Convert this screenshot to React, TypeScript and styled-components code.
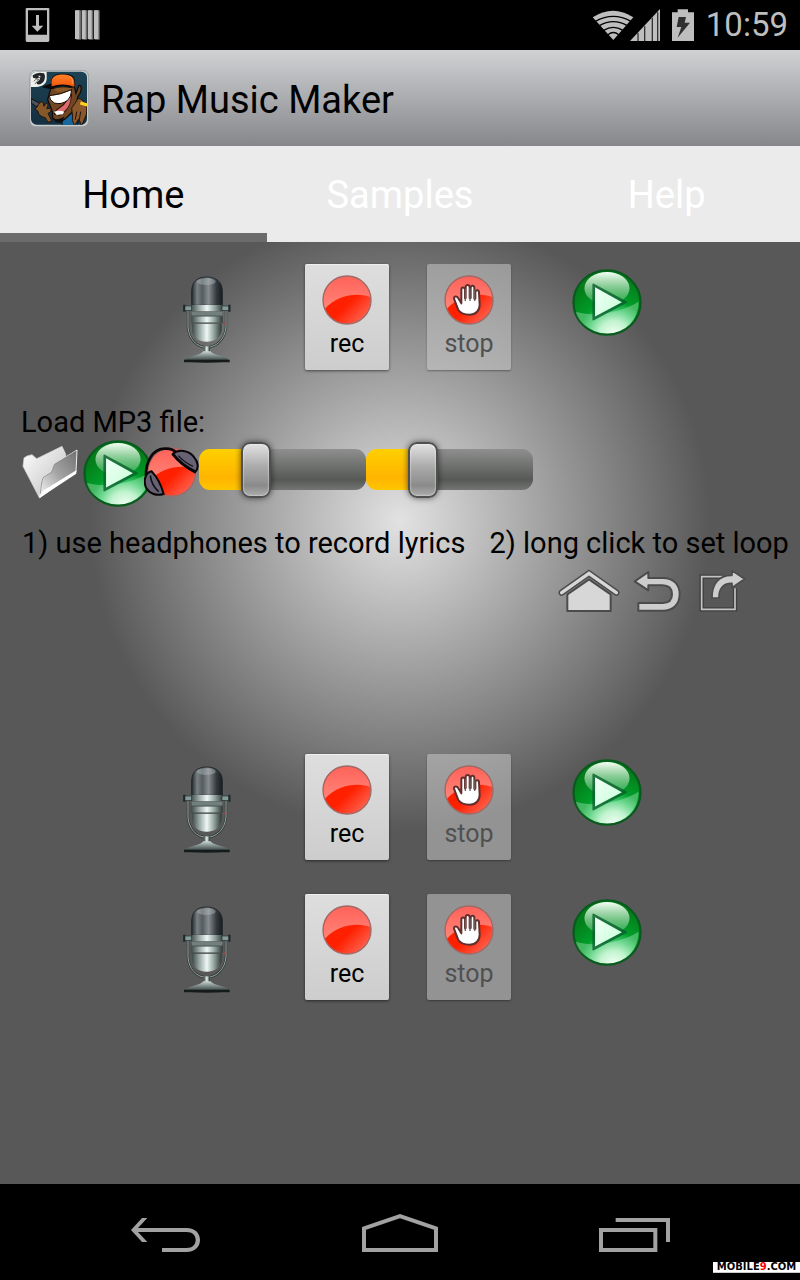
import React, { useState } from "react";
import styled, { createGlobalStyle } from "styled-components";

const GlobalStyle = createGlobalStyle`
  *, *::before, *::after { box-sizing: border-box; }
  body { margin: 0; background: #000; font-family: Roboto, "Noto Sans", sans-serif; color: #000; }
  button { font: inherit; color: inherit; margin: 0; padding: 0; border: 0; background: none; cursor: pointer; }
  svg { display: block; }
`;

const Screen = styled.div`
  position: relative;
  display: flex;
  flex-direction: column;
  min-height: 100vh;
  overflow-x: hidden;
`;

const StatusBar = styled.div`
  display: flex;
  justify-content: space-between;
  align-items: center;
  height: 50px;
  padding: 0 12px 0 25px;
  background: #000;
  color: #bebebe;
`;

const StatusGroup = styled.div<{ $gap: number }>`
  display: flex;
  align-items: center;
  gap: ${(p) => p.$gap}px;
`;

const Clock = styled.time`
  font-size: 33px;
  line-height: 50px;
`;

const ActionBar = styled.header`
  display: flex;
  align-items: center;
  gap: 12px;
  height: 96px;
  padding: 0 29px;
  background: linear-gradient(#d0d1d3, #86878b);
`;

const Title = styled.h1`
  margin: 0;
  padding-top: 4px;
  font-size: 38px;
  font-weight: 400;
  line-height: 48px;
`;

const Tabs = styled.nav`
  display: grid;
  grid-template-columns: repeat(3, 1fr);
  height: 96px;
  background: #ebebeb;
`;

const Tab = styled.button<{ $active: boolean }>`
  padding-top: 11px;
  border-bottom: 9px solid ${(p) => (p.$active ? "#6b6b6b" : "transparent")};
  color: ${(p) => (p.$active ? "#000" : "#fff")};
  font-size: 38px;
  line-height: 48px;
`;

const Content = styled.main`
  flex: 1;
  padding: 22px 0 60px;
  background: radial-gradient(circle 310px at 50% 279px, #e2e2e2, #585858) #585858;
`;

const TrackRow = styled.section`
  display: flex;
  justify-content: center;
  align-items: flex-start;
  gap: 61px;
  padding-left: 12px;
  margin-bottom: 34px;
`;

const ButtonPair = styled.div`
  display: flex;
  gap: 38px;
`;

const MicButton = styled.button`
  display: flex;
  justify-content: center;
  width: 74px;
  padding-top: 11px;
`;

const PlayButton = styled.button`
  padding-top: 5px;
`;

const PadButton = styled.button`
  display: flex;
  flex-direction: column;
  align-items: center;
  gap: 4px;
  width: 84px;
  height: 106px;
  padding-top: 11px;
  border-radius: 2px;
  background: linear-gradient(#dedede, #cdcdcd);
  box-shadow: 0 1px 3px rgba(0, 0, 0, 0.55), inset 0 1px 0 rgba(255, 255, 255, 0.5);
  font-size: 25px;
  line-height: 30px;

  &:disabled {
    background: rgba(205, 205, 205, 0.5);
    box-shadow: 0 1px 2px rgba(0, 0, 0, 0.35);
    color: #505050;
  }
`;

const Loader = styled.section`
  margin-bottom: 141px;
`;

const Caption = styled.p`
  margin: 0;
  padding-left: 21px;
  font-size: 29px;
  line-height: 36px;
`;

const LoaderRow = styled.div`
  display: flex;
  align-items: center;
  height: 67px;
  padding-left: 22px;
  margin-bottom: 18px;
`;

const FolderButton = styled.button`
  padding-bottom: 4px;
  margin-right: 5px;
`;

const HeadphoneButton = styled.button`
  position: relative;
  padding-bottom: 4px;
  margin-left: -9px;
`;

const Slider = styled.input`
  appearance: none;
  flex: 0 1 167px;
  min-width: 0;
  height: 41px;
  margin: 0 0 8px;
  border-radius: 11px;
  background:
    linear-gradient(#ffd000, #ffb400 70%, #ffc600) no-repeat 0 0 / calc(15px + (100% - 30px) * var(--level)) 100%,
    linear-gradient(#8e8f8e, #565956 75%, #737573);

  &::-webkit-slider-thumb {
    appearance: none;
    width: 30px;
    height: 56px;
    border: 2px solid #505050;
    border-radius: 9px;
    background: linear-gradient(#e2e2e2, #a9a9a9 45%, #8b8b8b 80%, #adadad);
    box-shadow: inset 0 0 2px #fff, 0 0 6px rgba(0, 0, 0, 0.6);
  }
`;

const Hints = styled.div`
  display: flex;
  gap: 24px;
  padding-left: 1px;
  white-space: nowrap;
  margin-bottom: 8px;

  ${Caption} + ${Caption} { padding-left: 0; }
`;

const Shortcuts = styled.div`
  display: flex;
  justify-content: flex-end;
  gap: 13px;
  padding-right: 54px;
  height: 44px;

  & > :last-child { margin-left: 5px; }
`;

const NavBar = styled.nav`
  display: grid;
  grid-template-columns: repeat(3, 1fr);
  height: 96px;
  padding: 0 49px 27px;
  background: #000;
`;

const NavButton = styled.button`
  display: flex;
  justify-content: center;
  align-items: flex-end;
`;

const Watermark = styled.div`
  position: absolute;
  right: 0;
  bottom: 7px;
  width: 87px;
  height: 11px;
  background: #fff;
  border-bottom: 1px solid #ccc;
  text-align: center;
  text-transform: uppercase;
  font: 700 10px/10px "DejaVu Sans", sans-serif;
  color: #000;
  white-space: nowrap;

  & b { color: #f00; }
`;

const MicIcon = () => (
  <svg width="50" height="89" viewBox="36 60 150 267" aria-hidden="true">
    <defs>
      <linearGradient id="micHead" x1="0" x2="1">
        <stop offset="0" stopColor="#20282b" /><stop offset=".18" stopColor="#8d9699" /><stop offset=".35" stopColor="#62696d" />
        <stop offset=".55" stopColor="#a0a6a8" /><stop offset=".8" stopColor="#394044" /><stop offset="1" stopColor="#14191b" />
      </linearGradient>
      <linearGradient id="micBody" x1="0" x2="1">
        <stop offset="0" stopColor="#3e4a48" /><stop offset=".25" stopColor="#99a8a5" /><stop offset=".5" stopColor="#eef7f4" />
        <stop offset=".72" stopColor="#9aaba6" /><stop offset="1" stopColor="#2d3836" />
      </linearGradient>
      <linearGradient id="micBase" x1="0" y1="0" x2="0" y2="1">
        <stop offset="0" stopColor="#c9d5d2" /><stop offset=".5" stopColor="#6d7a78" /><stop offset="1" stopColor="#1b2322" />
      </linearGradient>
      <pattern id="micMesh" width="6" height="6" patternUnits="userSpaceOnUse">
        <path d="M0 0L6 6M6 0L0 6" stroke="#20282b" strokeWidth="1" opacity=".6" />
      </pattern>
    </defs>
    <path d="M54 165V216C56 252 80 277 110 277S165 252 168 216V165" fill="none" stroke="#2e3837" strokeWidth="7" />
    <path d="M54 165V216C56 252 80 277 110 277S165 252 168 216V165" fill="none" stroke="#98a7a3" strokeWidth="3" />
    <rect x="102" y="274" width="17" height="24" fill="url(#micBody)" />
    <path d="M42 318Q44 309 72 302Q94 297 100 289H121Q128 297 150 302Q177 309 179 318Q150 323 110 323T42 318Z" fill="url(#micBase)" />
    <path d="M42 318H179" stroke="#141b1a" strokeWidth="7" fill="none" />
    <path d="M66 206H155V222C155 245 137 260 110 260S66 245 66 222Z" fill="url(#micBody)" />
    <path d="M65 151V109C65 79 84 66 110 66S157 79 157 109V151Z" fill="url(#micHead)" />
    <path d="M65 151V109C65 79 84 66 110 66S157 79 157 109V151Z" fill="url(#micMesh)" stroke="#23292b" strokeWidth="3" />
    <ellipse cx="109" cy="80" rx="28" ry="10" fill="#b9c1c2" opacity=".4" />
    <rect x="62" y="150" width="98" height="19" rx="3" fill="url(#micBody)" />
    <path d="M65 170H158L155 185H67Z" fill="#71807c" />
    <rect x="64" y="184" width="94" height="19" fill="url(#micBody)" />
    <path d="M64 183H158M64 204H158" stroke="#34413e" strokeWidth="2" />
    <path d="M43 149V170M178 149V170" stroke="#1b2827" strokeWidth="7" />
    <rect x="45" y="153" width="20" height="13" fill="#839a99" stroke="#26332f" strokeWidth="2" />
    <rect x="156" y="153" width="20" height="13" fill="#839a99" stroke="#26332f" strokeWidth="2" />
    <rect x="159" y="202" width="5" height="6" fill="#c43838" />
  </svg>
);

const RedDisc = () => (
  <>
    <defs>
      <linearGradient id="disc" x1="0" y1="0" x2="1" y2="1">
        <stop offset=".55" stopColor="#ff2000" /><stop offset="1" stopColor="#ff7a6c" />
      </linearGradient>
      <linearGradient id="discGloss" x1="0" y1="0" x2="0" y2="1">
        <stop offset="0" stopColor="#ff6259" /><stop offset="1" stopColor="#ff8578" />
      </linearGradient>
    </defs>
    <circle cx="75" cy="75" r="72" fill="url(#disc)" />
    <path d="M8 102C2 86 2 64 12 44C24 19 48 3 75 3S126 18 138 42C143 51 146 60 147 67C112 51 48 57 8 102Z" fill="url(#discGloss)" />
    <circle cx="75" cy="75" r="72" fill="none" stroke="#9f6a68" strokeWidth="4" />
  </>
);

const RecIcon = () => (
  <svg width="50" height="50" viewBox="0 0 150 150" aria-hidden="true"><RedDisc /></svg>
);

const StopIcon = () => (
  <svg width="50" height="50" viewBox="0 0 150 150" aria-hidden="true">
    <RedDisc />
    <path d="M43 105C39 94 34 82 30 71C29 63 39 62 43 70L52 85V44C52 35 62 35 63 44V70L65 69V36C66 28 76 28 77 36V69H80V38C81 30 91 31 91 39V71H94V51C95 43 105 44 105 52L107 89C107 106 96 119 77 119C60 119 49 114 43 105Z" fill="#fff" stroke="#5f302e" strokeWidth="6" strokeLinejoin="round" />
    <path d="M64 42V78M78 40V78M92 44V78" stroke="#6d5b5a" strokeWidth="4" />
  </svg>
);

const PlayIcon = () => (
  <svg width="70" height="67" viewBox="471 41 210 202" aria-hidden="true">
    <defs>
      <radialGradient id="orb" cx=".6" cy="1" r=".85">
        <stop offset="0" stopColor="#fafffb" /><stop offset=".25" stopColor="#b4efc4" /><stop offset=".45" stopColor="#35c463" />
        <stop offset=".6" stopColor="#009d2a" /><stop offset="1" stopColor="#047d1a" />
      </radialGradient>
      <linearGradient id="orbGloss" x1="0" y1="0" x2="0" y2="1">
        <stop offset="0" stopColor="#f4fff4" /><stop offset="1" stopColor="#8bd69b" stopOpacity=".3" />
      </linearGradient>
      <linearGradient id="orbArrow" x1="0" y1="0" x2="1" y2="1">
        <stop offset="0" stopColor="#f4fff8" /><stop offset="1" stopColor="#c3ffd6" />
      </linearGradient>
    </defs>
    <ellipse cx="576" cy="142" rx="101" ry="97" fill="url(#orb)" stroke="#075b1c" strokeWidth="7" />
    <path d="M482 170C535 187 620 172 671 140C672 188 636 232 577 234C528 233 490 205 482 170Z" fill="#e4ffec" opacity=".3" />
    <ellipse cx="576" cy="99" rx="68" ry="49" fill="url(#orbGloss)" />
    <path d="M535 88L633 141L535 193Z" fill="#09602d" opacity=".8" stroke="#09602d" strokeWidth="6" strokeLinejoin="round" />
    <path d="M540 96L621 141L540 184Z" fill="url(#orbArrow)" />
  </svg>
);

const FolderIcon = () => (
  <svg width="56" height="54" viewBox="39 131 168 162" aria-hidden="true">
    <defs>
      <linearGradient id="folderBack" x1="0" y1="0" x2="1" y2="1">
        <stop offset="0" stopColor="#fff" /><stop offset="1" stopColor="#bcbcbc" />
      </linearGradient>
      <linearGradient id="folderFront" x1="0" y1="1" x2="1" y2="0">
        <stop offset="0" stopColor="#f8f8f8" /><stop offset=".5" stopColor="#a3a3a3" /><stop offset="1" stopColor="#707070" />
      </linearGradient>
    </defs>
    <path d="M42 195L45 170L54 164L69 160L83 172L159 135L170 158L173 230L91 289Z" fill="url(#folderBack)" stroke="#d8d8d8" strokeWidth="2" />
    <path d="M92 289C95 261 97 237 103 227L127 211L135 188L204 146L201 212Z" fill="url(#folderFront)" stroke="#eee" strokeWidth="3" />
    <path d="M92 289L102 268L202 207V217Z" fill="#fff" />
    <path d="M94 277C96 256 98 238 103 228L128 212L136 189L201 149" fill="none" stroke="#747474" strokeWidth="2" />
  </svg>
);

const HeadphoneIcon = () => (
  <svg width="55" height="50" viewBox="402 142 165 150" aria-hidden="true">
    <g transform="translate(410 142)"><RedDisc /></g>
    <path d="M408 228C407 186 428 149 462 147C482 145 491 151 502 161" fill="none" stroke="#0b0708" strokeWidth="8" />
    <path d="M489 162C503 149 536 150 551 171C566 188 567 207 555 218C531 205 502 185 489 162Z" fill="#666173" stroke="#080506" strokeWidth="6" />
    <path d="M487 162Q513 195 557 217" fill="none" stroke="#080506" strokeWidth="8" />
    <path d="M505 168Q522 188 549 200" fill="none" stroke="#151116" strokeWidth="4" />
    <path d="M425 215C405 219 399 245 409 266C419 282 439 290 461 283C453 253 440 231 425 215Z" fill="#666173" stroke="#080506" strokeWidth="6" />
    <path d="M421 228Q424 256 446 276" fill="none" stroke="#151116" strokeWidth="5" />
  </svg>
);

const outline = { stroke: "#4b4b4b", strokeWidth: 6, strokeLinejoin: "round" as const };

const HomeIcon = () => (
  <svg width="62" height="44" viewBox="56 147 186 132" aria-hidden="true">
    <path d="M84 273V223L149 178L214 223V273Z" fill="#d7d7d7" {...outline} />
    <path d="M67 218L149 160L231 218" fill="none" stroke="#4b4b4b" strokeWidth="19" strokeLinecap="round" />
    <path d="M67 218L149 160L231 218" fill="none" stroke="#d7d7d7" strokeWidth="10" strokeLinecap="round" />
  </svg>
);

const ReturnIcon = () => (
  <svg width="48" height="43" viewBox="279 150 144 129" aria-hidden="true">
    <path d="M284 184L325 156V174H368C402 174 419 195 419 222C419 253 400 272 369 272H295V249H368C387 249 396 239 396 223C396 206 386 196 367 196H325V211Z" fill="#cdcdcd" {...outline} />
  </svg>
);

const ShareIcon = () => (
  <svg width="47" height="44" viewBox="480 144 141 132" aria-hidden="true">
    <path d="M551 167H488V265H588V202" fill="none" stroke="#3f3f3f" strokeWidth="13" />
    <path d="M551 167H488V265H588V202" fill="none" stroke="#c4c4c4" strokeWidth="5" />
    <path d="M519 231C518 190 539 162 579 163V149L617 174L579 200V187C552 186 539 204 540 231Z" fill="#cdcdcd" {...outline} strokeWidth={5} />
  </svg>
);

const AppIcon = () => (
  <svg width="60" height="57" viewBox="27 27 180 171" aria-hidden="true">
    <defs>
      <linearGradient id="appBg" x1="0" y1="0" x2="0" y2="1">
        <stop offset="0" stopColor="#1c4354" /><stop offset="1" stopColor="#142f40" />
      </linearGradient>
      <linearGradient id="cap" x1="0" y1="0" x2="0" y2="1">
        <stop offset="0" stopColor="#ff8128" /><stop offset="1" stopColor="#f2560d" />
      </linearGradient>
      <clipPath id="appClip"><rect x="33" y="32" width="168" height="159" rx="17" /></clipPath>
    </defs>
    <rect x="29" y="28" width="177" height="169" rx="18" fill="#c9cccd" stroke="#8e9193" strokeWidth="2" />
    <g clipPath="url(#appClip)">
      <rect x="31" y="30" width="172" height="164" fill="url(#appBg)" />
      <path d="M128 169L153 150L175 165L171 194H126Z" fill="#1768a1" stroke="#08141b" strokeWidth="3" />
      <path d="M92 83L163 77L168 97L177 73C188 72 185 94 173 108L169 131L157 153L136 173L120 184L98 172L97 151L83 116Z" fill="#704623" stroke="#130c09" strokeWidth="4" />
      <path d="M99 84Q123 74 157 82L145 90L113 93Z" fill="#8e5928" />
      <path d="M156 92C156 126 144 152 119 164L100 160L108 146L130 130Z" fill="#2a0b0a" />
      <path d="M152 104C153 127 142 148 124 156L108 150L132 132Z" fill="#dd6a6c" />
      <path d="M88 104Q120 102 155 86Q154 108 143 118Q124 132 103 126Q88 118 88 104Z" fill="#fff" stroke="#160c08" strokeWidth="3" />
      <path d="M102 152Q119 146 133 152L128 160L110 162Z" fill="#fff" />
      <path d="M66 79C76 71 88 71 95 67C91 41 110 37 140 39C160 41 168 52 165 75L152 80Q119 71 91 84Q77 83 66 79Z" fill="#0c0a0c" />
      <path d="M95 70C92 44 112 39 138 41C160 43 165 55 163 77Q128 65 95 76Z" fill="url(#cap)" />
      <path d="M150 45Q160 54 157 69" stroke="#ffb06b" strokeWidth="2" fill="none" />
      <path d="M34 113L81 139Q91 146 84 151L68 149L33 126Z" fill="#4a525a" stroke="#121519" strokeWidth="3" />
      <path d="M51 139C57 124 66 119 70 126L72 136L77 128Q84 124 84 133L80 143L91 142Q98 151 84 157L95 180L84 184L76 170Q55 166 54 151L44 143Z" fill="#875829" stroke="#25160c" strokeWidth="3" />
      <path d="M157 178C160 154 151 144 158 136C170 124 170 110 181 113C194 122 204 132 199 161L185 194L176 174L164 194Z" fill="#8a582c" stroke="#20140c" strokeWidth="3" />
      <path d="M170 152L166 176M182 152L178 176" stroke="#20140c" strokeWidth="3" />
      <path d="M181 126L202 132" stroke="#ffd21d" strokeWidth="9" />
      <path d="M98 170Q116 181 134 166L125 184H107Z" fill="#100e10" />
      <path d="M28 27H80V54C79 73 60 80 28 78Z" fill="#f1f1ec" />
      <path d="M38 43Q52 31 72 37Q79 48 70 63Q55 77 49 65Q62 57 60 48L50 53L39 50Z" fill="#22272a" />
      <path d="M56 41L65 49L54 50ZM41 61Q49 51 56 55L45 69" fill="#f6f6f0" stroke="#222" strokeWidth="2" />
    </g>
  </svg>
);

const DownloadIcon = () => (
  <svg width="25" height="36" viewBox="75 21 75 108" aria-hidden="true">
    <path fillRule="evenodd" fill="#bebebe" d="M80 24H145Q148 24 148 28V121Q148 126 144 126H81Q77 126 77 121V28Q77 24 80 24ZM84 31V104H141V31Z" />
    <path d="M108 45H117V77H130L112 95L95 77H108Z" fill="#bebebe" />
  </svg>
);

const BarsIcon = () => (
  <svg width="25" height="32" viewBox="225 27 75 96" aria-hidden="true">
    <path d="M229 31H243V119H229ZM247 31H261V119H247ZM266 31H280V119H266ZM284 31H299V119H284Z" fill="#6b6b6b" />
    <path d="M225 31H238V117H225ZM245 31H257V117H245ZM263 31H275V117H263ZM282 31H295V117H282Z" fill="#bebebe" />
  </svg>
);

const SignalIcons = () => (
  <svg width="68" height="32" viewBox="93 24 204 96" aria-hidden="true">
    <path d="M95 49Q156 10 217 49L157 117Z" fill="#bebebe" />
    <path d="M103 61Q157 31 210 61M115 74Q157 50 199 74M128 88Q157 70 186 88M141 101Q157 88 173 101" fill="none" stroke="#000" strokeWidth="4" />
    <path d="M207 120L297 24V120Z" fill="#bebebe" />
    <path d="M231 96V120M251 76V120M274 50V120M290 34V120" stroke="#333" strokeWidth="4" />
  </svg>
);

const BatteryIcon = () => (
  <svg width="22" height="32" viewBox="330 24 66 96" aria-hidden="true">
    <path d="M330 34H347V25H378V34H396V120H330Z" fill="#bebebe" />
    <path d="M350 48H372L368 65H384L347 110L358 78H344Z" fill="#303030" />
  </svg>
);

const NavBack = () => (
  <svg width="70" height="36" viewBox="36 111 210 108" aria-hidden="true">
    <path d="M36 150L69 114H85L57 144H202C230 144 243 161 243 180S230 216 202 216H129V204H202C221 204 230 194 230 180S221 156 202 156H57L85 186H69Z" fill="#a2a2a2" />
  </svg>
);

const NavHome = () => (
  <svg width="76" height="40" viewBox="726 99 228 120" aria-hidden="true">
    <path d="M732 210V145L840 108L948 145V210Z" fill="none" stroke="#a2a2a2" strokeWidth="12" />
  </svg>
);

const NavRecents = () => (
  <svg width="71" height="36" viewBox="30 51 213 108" aria-hidden="true">
    <path d="M36 90H199V150H36ZM80 60H237V126" fill="none" stroke="#a2a2a2" strokeWidth="12" />
  </svg>
);

const TrackControls = ({ track }: { track: number }) => (
  <TrackRow aria-label={`Track ${track}`}>
    <MicButton aria-label="Microphone"><MicIcon /></MicButton>
    <ButtonPair>
      <PadButton><RecIcon />rec</PadButton>
      <PadButton disabled><StopIcon />stop</PadButton>
    </ButtonPair>
    <PlayButton aria-label="Play"><PlayIcon /></PlayButton>
  </TrackRow>
);

const LevelSlider = ({ label }: { label: string }) => {
  const [level, setLevel] = useState(31);
  return (
    <Slider
      type="range"
      min={0}
      max={100}
      value={level}
      aria-label={label}
      onChange={(e) => setLevel(Number(e.target.value))}
      style={{ "--level": level / 100 } as React.CSSProperties}
    />
  );
};

const tabs = ["Home", "Samples", "Help"];

export default function App() {
  const [active, setActive] = useState("Home");
  return (
    <>
      <GlobalStyle />
      <Screen>
        <StatusBar>
          <StatusGroup $gap={25}><DownloadIcon /><BarsIcon /></StatusGroup>
          <StatusGroup $gap={12}><SignalIcons /><BatteryIcon /><Clock>10:59</Clock></StatusGroup>
        </StatusBar>
        <ActionBar><AppIcon /><Title>Rap Music Maker</Title></ActionBar>
        <Tabs>
          {tabs.map((name) => (
            <Tab key={name} $active={name === active} onClick={() => setActive(name)}>{name}</Tab>
          ))}
        </Tabs>
        <Content>
          <TrackControls track={1} />
          <Loader>
            <Caption>Load MP3 file:</Caption>
            <LoaderRow>
              <FolderButton aria-label="Open folder"><FolderIcon /></FolderButton>
              <button aria-label="Play file"><PlayIcon /></button>
              <HeadphoneButton aria-label="Record with headphones"><HeadphoneIcon /></HeadphoneButton>
              <LevelSlider label="Music volume" />
              <LevelSlider label="Voice volume" />
            </LoaderRow>
            <Hints>
              <Caption>1) use headphones to record lyrics</Caption>
              <Caption>2) long click to set loop</Caption>
            </Hints>
            <Shortcuts>
              <button aria-label="Home"><HomeIcon /></button>
              <button aria-label="Back"><ReturnIcon /></button>
              <button aria-label="Share"><ShareIcon /></button>
            </Shortcuts>
          </Loader>
          <TrackControls track={2} />
          <TrackControls track={3} />
        </Content>
        <NavBar>
          <NavButton aria-label="System back"><NavBack /></NavButton>
          <NavButton aria-label="System home"><NavHome /></NavButton>
          <NavButton aria-label="Recent apps"><NavRecents /></NavButton>
        </NavBar>
        <Watermark>mobile<b>9</b>.com</Watermark>
      </Screen>
    </>
  );
}
